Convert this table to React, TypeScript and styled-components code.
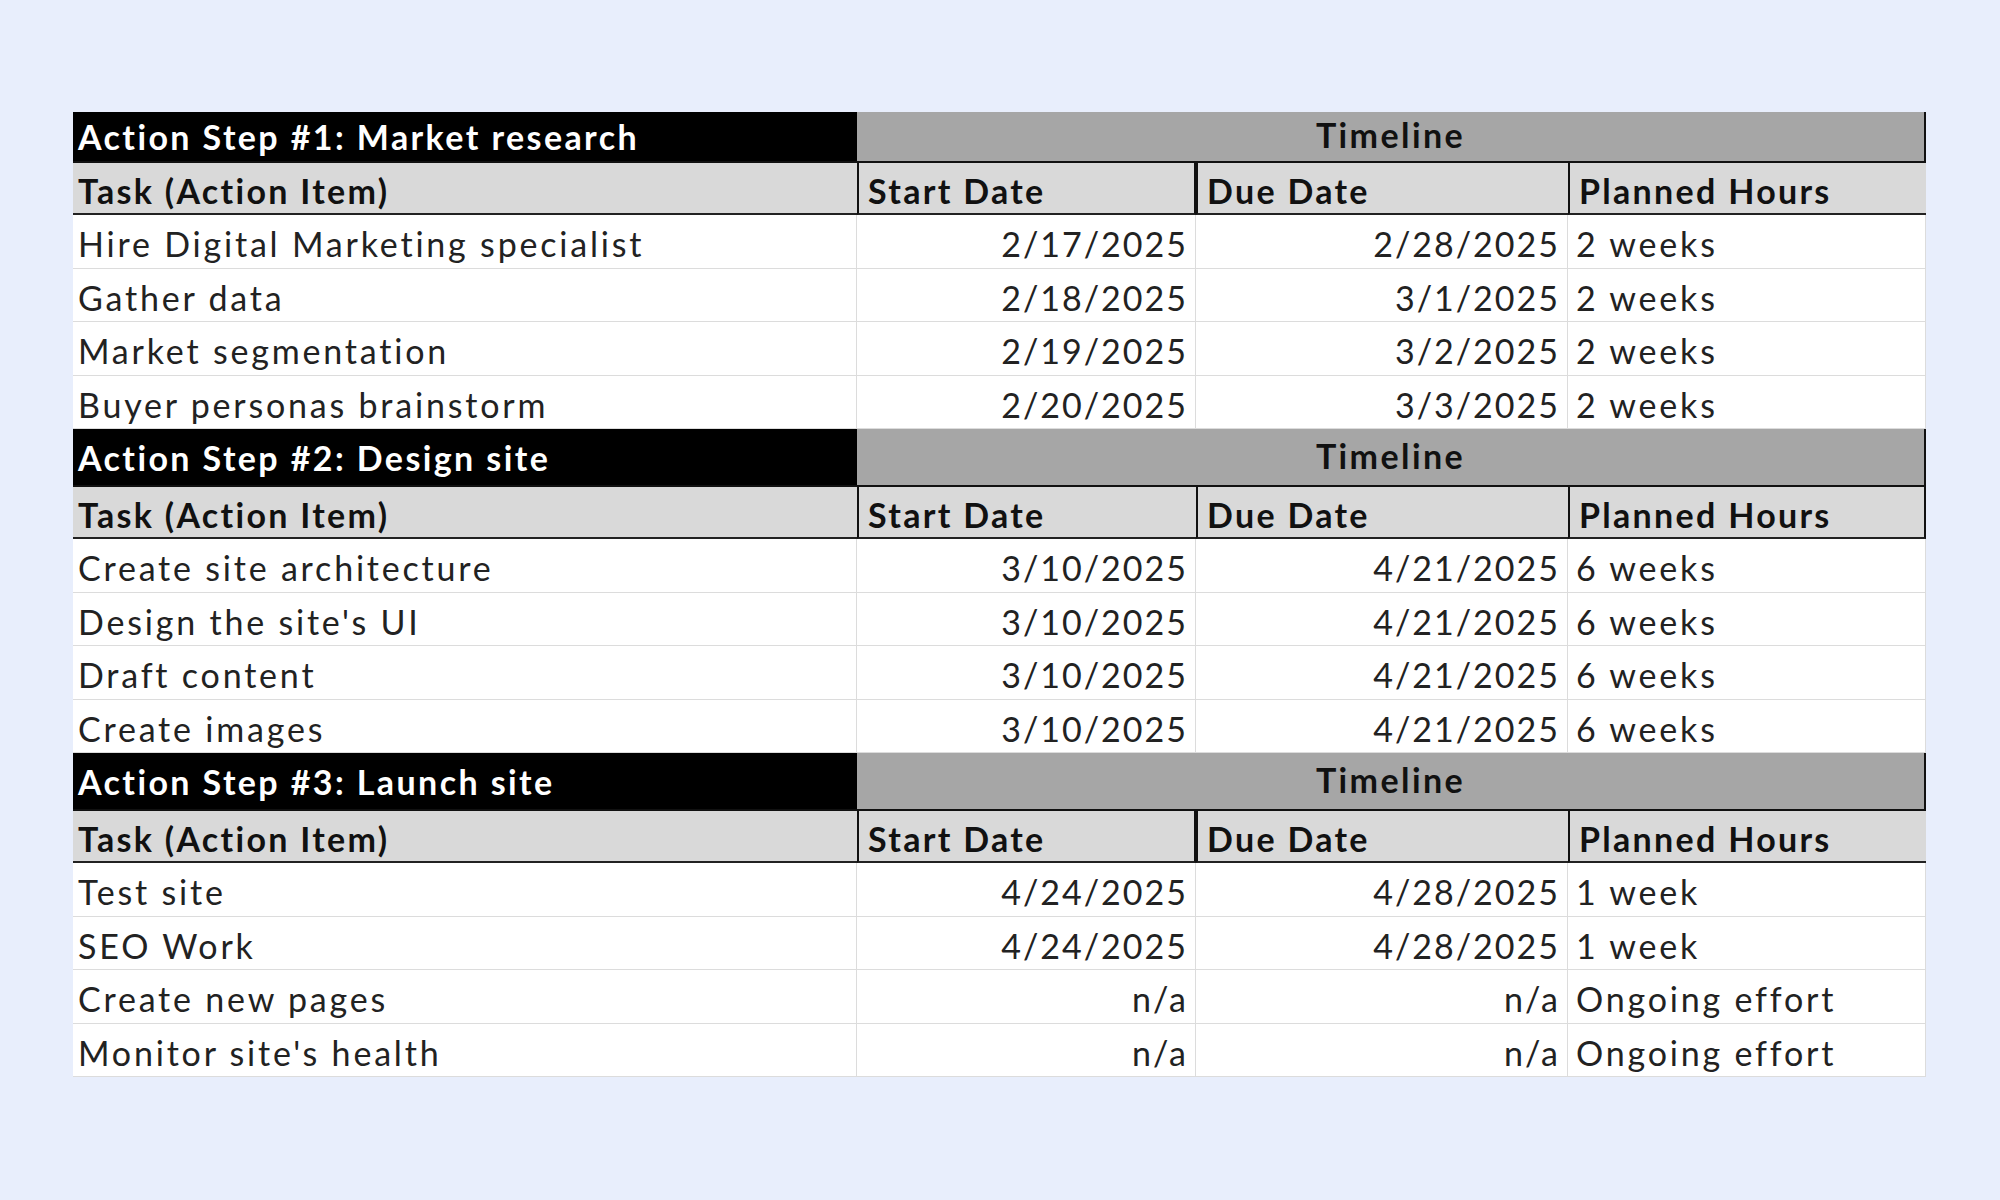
import styled, { createGlobalStyle } from 'styled-components';

const GlobalStyle = createGlobalStyle`
    html, body {
        margin: 0;
        padding: 0;
        background: #e8eefc;
    }
    * {
        box-sizing: border-box;
    }
`;

const Page = styled.main`
    width: 2000px;
    height: 1200px;
    padding: 112px 0 0 73px;
    background: #e8eefc;
    font-family: Lato, "Open Sans", "Liberation Sans", sans-serif;
`;

const Sheet = styled.div`
    display: grid;
    grid-template-columns: 784px 339px 372px 358px;
    width: 1853px;
    background: #fff;
`;

const TitleCell = styled.div<{ $h: number }>`
    height: ${p => p.$h}px;
    display: flex;
    align-items: center;
    padding: 0 5px;
    background: #000;
    color: #fff;
    font-size: 34px;
    font-weight: 700;
    letter-spacing: 2.4px;
    white-space: nowrap;
`;

const TimelineCell = styled.div<{ $h: number }>`
    grid-column: span 3;
    height: ${p => p.$h}px;
    display: flex;
    align-items: center;
    justify-content: center;
    padding-bottom: 4px;
    background: #a6a6a6;
    border-right: 2px solid #111;
    color: #111;
    font-size: 34px;
    font-weight: 700;
    letter-spacing: 2.4px;
`;

const HeadCell = styled.div<{ $first?: boolean }>`
    height: 54px;
    display: flex;
    align-items: center;
    padding: 4px ${p => (p.$first ? '5px' : '9px')} 0;
    background: #d9d9d9;
    border-top: 2px solid #111;
    border-bottom: 2px solid #222;
    border-left: ${p => (p.$first ? 'none' : '2px solid #111')};
    color: #111;
    font-size: 34px;
    font-weight: 700;
    letter-spacing: 2.3px;
    white-space: nowrap;

    &:nth-child(4n) {
        border-right: 2px solid #111;
    }
`;

const Cell = styled.div<{ $align?: 'left' | 'right' }>`
    height: 53.5px;
    display: flex;
    align-items: center;
    justify-content: ${p => (p.$align === 'right' ? 'flex-end' : 'flex-start')};
    padding: 5px ${p => (p.$align === 'right' ? '7px' : '8px')} 0 8px;
    border-right: 1px solid #dcdcdc;
    border-bottom: 1px solid #dcdcdc;
    color: #222;
    font-size: 34px;
    letter-spacing: ${p => (p.$align === 'right' ? '2px' : '2.8px')};
    white-space: nowrap;
`;

const TaskCell = styled(Cell)`
    padding-left: 5px;
`;

type Task = {
    name: string;
    start: string;
    due: string;
    planned: string;
};

type Step = {
    title: string;
    titleHeight: number;
    tasks: Task[];
};

const steps: Step[] = [
    {
        title: 'Action Step #1: Market research',
        titleHeight: 49,
        tasks: [
            { name: 'Hire Digital Marketing specialist', start: '2/17/2025', due: '2/28/2025', planned: '2 weeks' },
            { name: 'Gather data', start: '2/18/2025', due: '3/1/2025', planned: '2 weeks' },
            { name: 'Market segmentation', start: '2/19/2025', due: '3/2/2025', planned: '2 weeks' },
            { name: 'Buyer personas brainstorm', start: '2/20/2025', due: '3/3/2025', planned: '2 weeks' },
        ],
    },
    {
        title: 'Action Step #2: Design site',
        titleHeight: 56,
        tasks: [
            { name: 'Create site architecture', start: '3/10/2025', due: '4/21/2025', planned: '6 weeks' },
            { name: "Design the site's UI", start: '3/10/2025', due: '4/21/2025', planned: '6 weeks' },
            { name: 'Draft content', start: '3/10/2025', due: '4/21/2025', planned: '6 weeks' },
            { name: 'Create images', start: '3/10/2025', due: '4/21/2025', planned: '6 weeks' },
        ],
    },
    {
        title: 'Action Step #3: Launch site',
        titleHeight: 56,
        tasks: [
            { name: 'Test site', start: '4/24/2025', due: '4/28/2025', planned: '1 week' },
            { name: 'SEO Work', start: '4/24/2025', due: '4/28/2025', planned: '1 week' },
            { name: 'Create new pages', start: 'n/a', due: 'n/a', planned: 'Ongoing effort' },
            { name: "Monitor site's health", start: 'n/a', due: 'n/a', planned: 'Ongoing effort' },
        ],
    },
];

const App = () => {
    return (
        <>
            <GlobalStyle />
            <Page>
                <Sheet>
                    {steps.map(step => (
                        <Section key={step.title} step={step} />
                    ))}
                </Sheet>
            </Page>
        </>
    );
};

const Section = ({ step }: { step: Step }) => (
    <>
        <TitleCell $h={step.titleHeight}>{step.title}</TitleCell>
        <TimelineCell $h={step.titleHeight}>Timeline</TimelineCell>
        <HeadCell $first>Task (Action Item)</HeadCell>
        <HeadCell>Start Date</HeadCell>
        <HeadCell>Due Date</HeadCell>
        <HeadCell>Planned Hours</HeadCell>
        {step.tasks.map(task => (
            <Row key={task.name} task={task} />
        ))}
    </>
);

const Row = ({ task }: { task: Task }) => (
    <>
        <TaskCell>{task.name}</TaskCell>
        <Cell $align="right">{task.start}</Cell>
        <Cell $align="right">{task.due}</Cell>
        <Cell>{task.planned}</Cell>
    </>
);

export default App;
